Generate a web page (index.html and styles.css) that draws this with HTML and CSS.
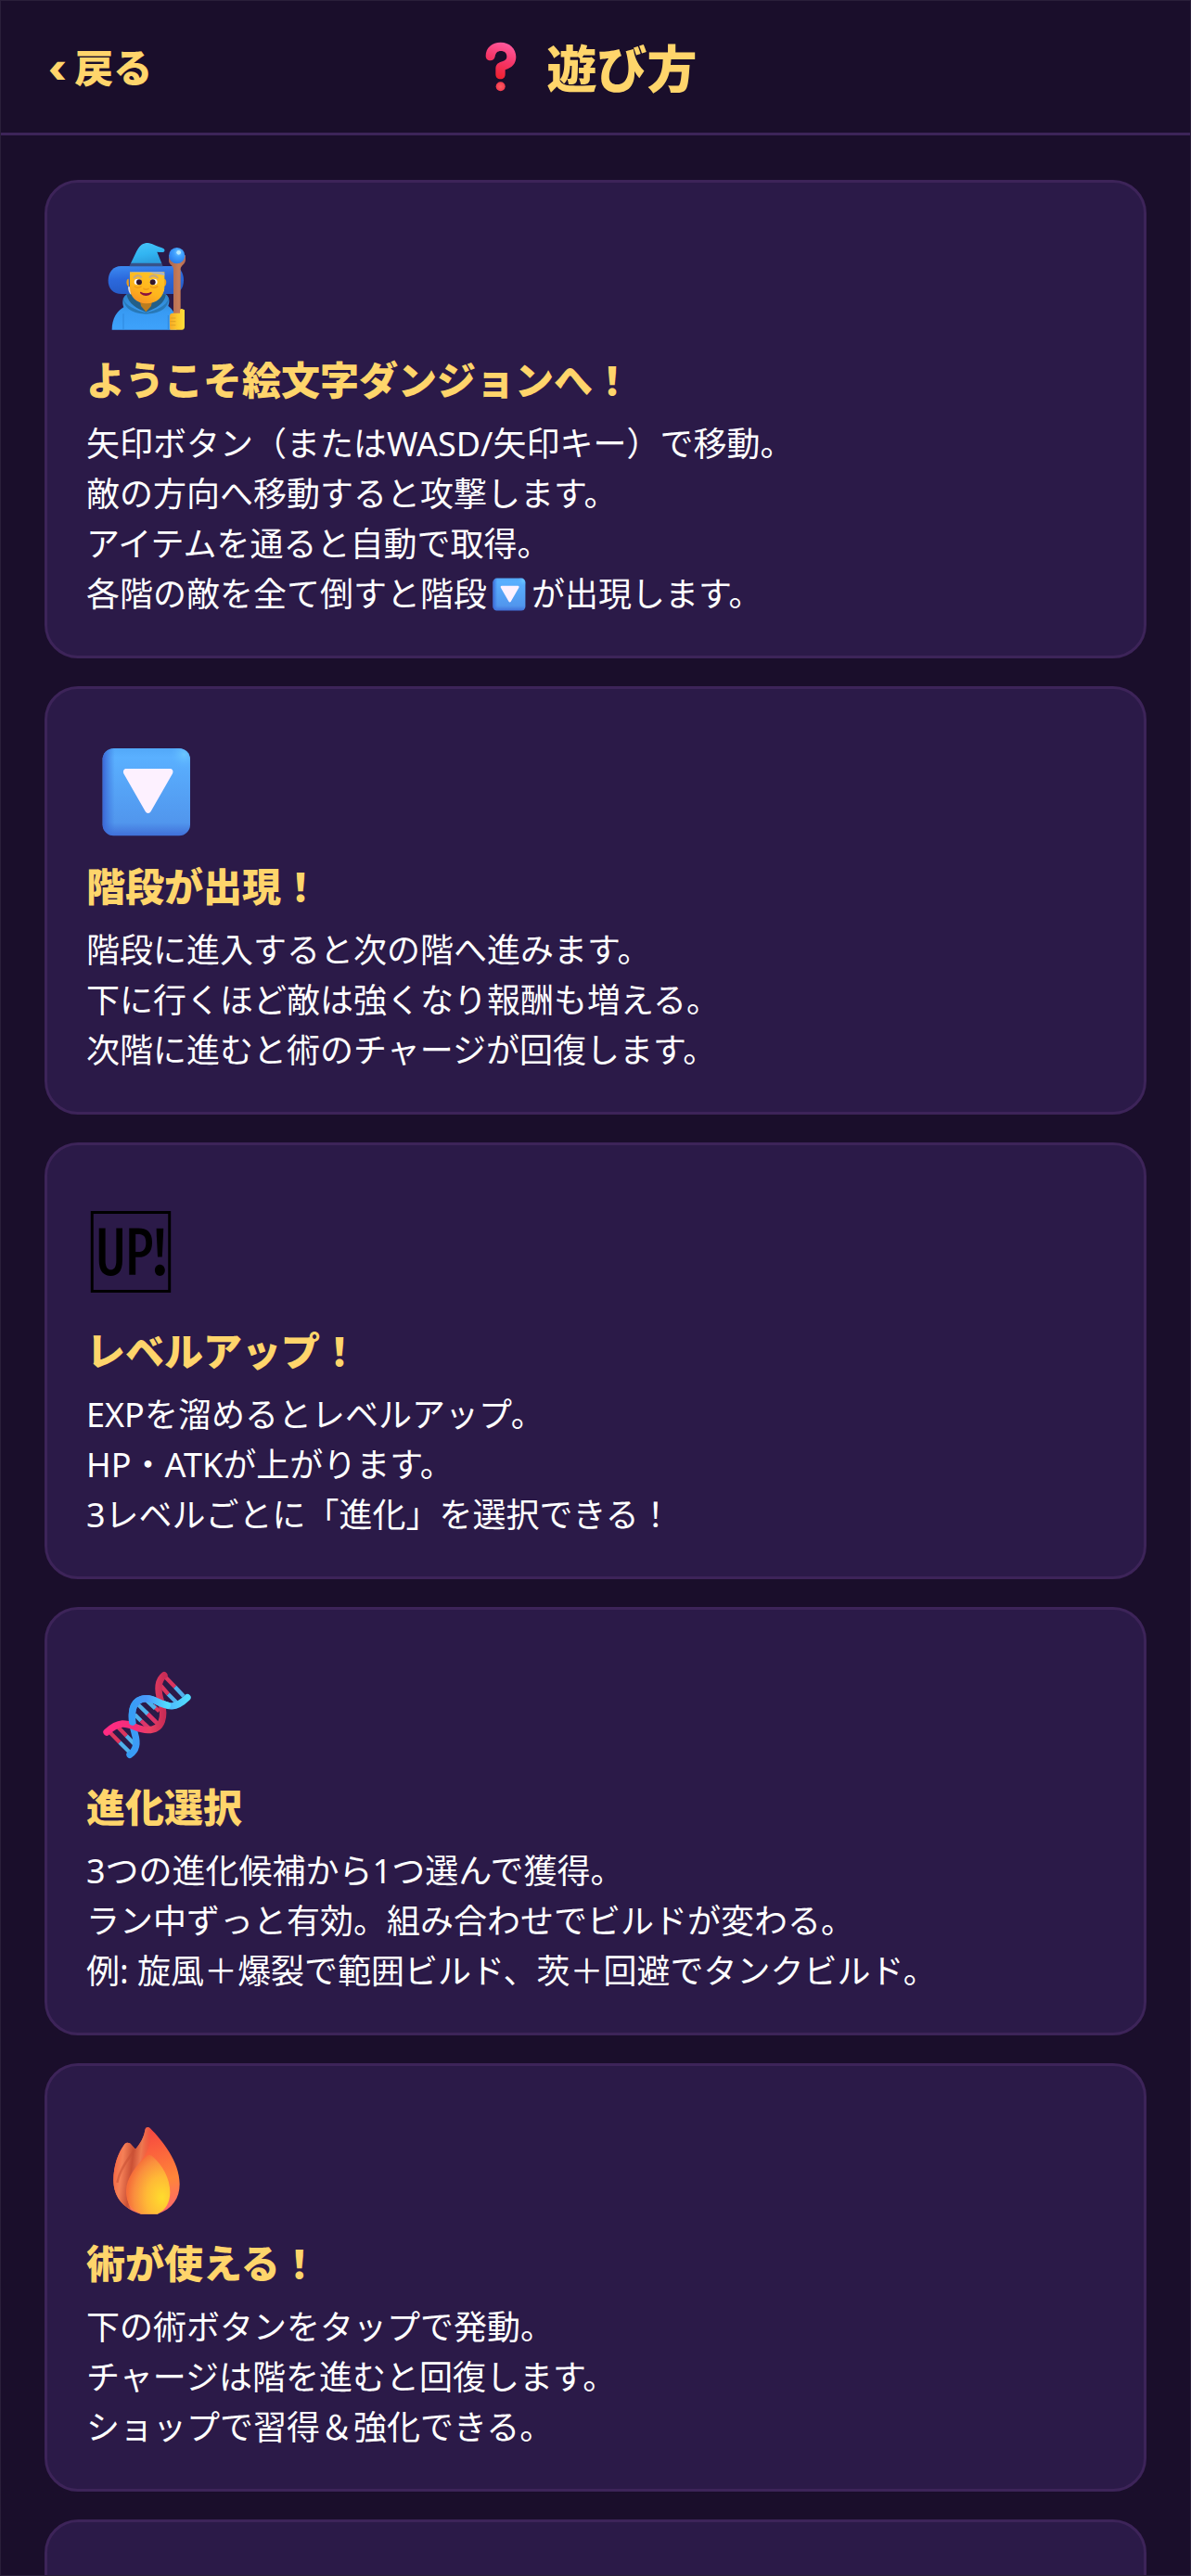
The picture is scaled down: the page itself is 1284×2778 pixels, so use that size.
FILE: index.html
```html
<!DOCTYPE html>
<html lang="ja">
    <head>
        <meta charset="UTF-8">
        <meta name="viewport" content="width=device-width, initial-scale=1.0">
        <title>遊び方</title>
        <link rel="stylesheet" href="styles.css">
    </head>
    <body>
        <header>
            <button type="button" class="back"><span class="chevron">‹ </span>戻る</button>
            <h1>
                <svg class="emoji" viewBox="81 78 183 183" aria-hidden="true">
                    <defs>
                        <linearGradient id="question" x1="0.7" y1="0" x2="0.4" y2="1">
                            <stop offset="0" stop-color="#ff5ba0"/>
                            <stop offset="0.5" stop-color="#f53668"/>
                            <stop offset="1" stop-color="#ef202c"/>
                        </linearGradient>
                        <radialGradient id="questionDot">
                            <stop offset="0" stop-color="#ff5b60"/>
                            <stop offset="1" stop-color="#f33a4e"/>
                        </radialGradient>
                    </defs>
                    <path d="M122 136C122 109 143 92 170 92C199 92 220 112 220 139C220 160 208 174 185 181V195C185 205 179 211 170 211C160 211 154 205 154 195V178C154 165 160 159 171 155C184 151 190 148 190 138C190 126 182 120 171 120C160 120 154 126 152 138C150 147 144 151 137 151C128 151 122 145 122 136Z" fill="url(#question)"/>
                    <circle cx="170" cy="235" r="15" fill="url(#questionDot)"/>
                </svg>
                <span>遊び方</span>
            </h1>
            <div class="spacer"></div>
        </header>

        <main>
            <section class="card">
                <div class="icon">
                    <svg viewBox="72 42 324 324" aria-hidden="true">
                        <defs>
                            <linearGradient id="hat" x1="0" y1="0" x2="0.3" y2="1">
                                <stop offset="0" stop-color="#48c4f8"/>
                                <stop offset="0.6" stop-color="#32b5f2"/>
                                <stop offset="1" stop-color="#2ba0e0"/>
                            </linearGradient>
                            <linearGradient id="brim" x1="0" y1="0" x2="0.2" y2="1">
                                <stop offset="0" stop-color="#3c8cf2"/>
                                <stop offset="0.5" stop-color="#2b68dc"/>
                                <stop offset="1" stop-color="#255cc8"/>
                            </linearGradient>
                            <linearGradient id="face" x1="0.8" y1="0" x2="0.3" y2="1">
                                <stop offset="0" stop-color="#ffc526"/>
                                <stop offset="0.6" stop-color="#ffb51c"/>
                                <stop offset="1" stop-color="#f79325"/>
                            </linearGradient>
                            <linearGradient id="robe" x1="0" y1="0" x2="0" y2="1">
                                <stop offset="0" stop-color="#2e83c8"/>
                                <stop offset="0.5" stop-color="#389bf4"/>
                                <stop offset="1" stop-color="#3ea2fb"/>
                            </linearGradient>
                            <linearGradient id="staff">
                                <stop offset="0" stop-color="#a86450"/>
                                <stop offset="0.6" stop-color="#c77d58"/>
                                <stop offset="1" stop-color="#b46a54"/>
                            </linearGradient>
                            <radialGradient id="orb" cx="0.6" cy="0.3" r="0.7">
                                <stop offset="0" stop-color="#7cc9ff"/>
                                <stop offset="0.4" stop-color="#3fa0ff"/>
                                <stop offset="1" stop-color="#2b7bea"/>
                            </radialGradient>
                            <linearGradient id="hand">
                                <stop offset="0" stop-color="#f7a928"/>
                                <stop offset="0.5" stop-color="#fcc82c"/>
                                <stop offset="1" stop-color="#ffdd3a"/>
                            </linearGradient>
                        </defs>
                        <path d="M151 141H316C340 141 354 160 354 187C354 213 340 231 318 231H153C126 231 110 213 110 188C110 161 126 141 151 141Z" fill="url(#brim)"/>
                        <path d="M122 347C122 310 139 286 160 274C154 258 157 240 170 232H296C308 240 310 255 304 270C319 280 329 300 331 320V347Z" fill="url(#robe)"/>
                        <path d="M170 234C176 264 203 278 232 290C265 278 292 262 296 234L282 230H182Z" fill="#235f88"/>
                        <path d="M158 243C164 270 199 282 232 292C266 282 298 272 306 243C304 282 272 295 232 296C194 295 162 282 158 243Z" fill="#2879b8"/>
                        <path d="M213 255H252L249 270L232 289L216 270Z" fill="#ba7c20"/>
                        <path d="M176 182C168 180 166 203 177 208ZM290 182C300 180 301 203 290 208Z" fill="#ec9d1c"/>
                        <path d="M174 208C174 220 178 229 184 234L188 208ZM291 208C293 218 288 228 281 233L278 208Z" fill="#d5d8e5"/>
                        <path d="M180 160H292V206C292 239 267 262 233 262C202 262 180 241 180 211Z" fill="url(#face)"/>
                        <path d="M180 168C180 163 185 160 192 160H284C291 161 292 164 292 172C281 166 266 169 244 161H191C184 162 181 164 180 168Z" fill="#a7b4c8"/>
                        <path d="M194 178C200 169 211 170 216 176M245 176C251 170 263 170 269 178" fill="none" stroke="#c4aa82" stroke-width="7" stroke-linecap="round"/>
                        <ellipse cx="206" cy="192" rx="12" ry="10" fill="#fff"/>
                        <ellipse cx="257" cy="192" rx="12" ry="10" fill="#fff"/>
                        <circle cx="210" cy="193" r="9" fill="#33172a"/>
                        <circle cx="254" cy="193" r="9" fill="#33172a"/>
                        <path d="M196 207C201 212 211 212 216 207M247 207C252 212 263 212 269 207M225 214Q232 219 240 214" fill="none" stroke="#f09c18" stroke-width="5" stroke-linecap="round"/>
                        <path d="M215 224Q232 233 249 224C252 224 252 228 248 231C239 239 225 239 216 231C212 228 212 224 215 224Z" fill="#8b123f"/>
                        <path d="M183 132L202 92C213 72 223 66 238 66C252 67 263 76 282 81C290 84 294 86 292 92C290 98 282 96 268 95L283 132Z" fill="url(#hat)"/>
                        <path d="M183 131H283L287 142H178Z" fill="#37538a"/>
                        <path d="M159 295V347M304 300V347" stroke="#2f87dd" stroke-width="3"/>
                        <path d="M306 105V124C306 136 321 140 321 151V296H344V151C344 139 360 135 360 121V106Z" fill="url(#staff)"/>
                        <circle cx="332" cy="107" r="26" fill="url(#orb)"/>
                        <circle cx="338" cy="97" r="7" fill="#b6e8ff"/>
                        <path d="M318 293H342V285C342 281 345 278 350 280L357 283V337C357 344 354 347 348 347H310C309 336 308 303 310 298Q311 293 318 293Z" fill="url(#hand)"/>
                        <path d="M312 309H327M311 320H327M311 332H327" stroke="#dda224" stroke-width="3" stroke-linecap="round"/>
                    </svg>
                </div>
                <h2>ようこそ絵文字ダンジョンへ！</h2>
                <p>
                    矢印ボタン（またはWASD/矢印キー）で移動。<br>
                    敵の方向へ移動すると攻撃します。<br>
                    アイテムを通ると自動で取得。<br>
                    各階の敵を全て倒すと階段<svg class="emoji" viewBox="72 60 324 324" aria-label="階段"><use href="#down"/></svg>が出現します。
                </p>
            </section>

            <section class="card">
                <div class="icon">
                    <svg viewBox="72 60 324 324" aria-hidden="true">
                        <defs>
                            <linearGradient id="key" x1="0" y1="0" x2="0" y2="1">
                                <stop offset="0" stop-color="#52a8f8"/>
                                <stop offset="0.1" stop-color="#5ab0ff"/>
                                <stop offset="0.85" stop-color="#5196ed"/>
                                <stop offset="1" stop-color="#406fd8"/>
                            </linearGradient>
                            <linearGradient id="keySide">
                                <stop offset="0" stop-color="#3c66d5"/>
                                <stop offset="0.14" stop-color="#3c78e0" stop-opacity="0"/>
                            </linearGradient>
                            <radialGradient id="keyLight" cx="0.93" cy="0.07" r="0.16">
                                <stop offset="0" stop-color="#6bc6ff"/>
                                <stop offset="1" stop-color="#5cb3ff" stop-opacity="0"/>
                            </radialGradient>
                        </defs>
                        <g id="down">
                            <rect x="92" y="81" width="283" height="283" rx="36" fill="url(#key)"/>
                            <rect x="92" y="81" width="283" height="283" rx="36" fill="url(#keySide)"/>
                            <rect x="92" y="81" width="283" height="283" rx="36" fill="url(#keyLight)"/>
                            <path d="M168 147H310C318 147 322 155 318 163L248 285C244 293 234 293 230 285L160 163C157 155 160 147 168 147Z" fill="#fdf1ff"/>
                        </g>
                    </svg>
                </div>
                <h2>階段が出現！</h2>
                <p>
                    階段に進入すると次の階へ進みます。<br>
                    下に行くほど敵は強くなり報酬も増える。<br>
                    次階に進むと術のチャージが回復します。
                </p>
            </section>

            <section class="card">
                <div class="icon icon-text">🆙</div>
                <h2>レベルアップ！</h2>
                <p>
                    EXPを溜めるとレベルアップ。<br>
                    HP・ATKが上がります。<br>
                    3レベルごとに「進化」を選択できる！
                </p>
            </section>

            <section class="card">
                <div class="icon">
                    <svg viewBox="72 33 324 324" fill="none" stroke-linecap="round" aria-hidden="true">
                        <defs>
                            <linearGradient id="redStrand">
                                <stop offset="0" stop-color="#ff2b83"/>
                                <stop offset="0.5" stop-color="#f42d79"/>
                                <stop offset="0.75" stop-color="#e94063"/>
                                <stop offset="1" stop-color="#c92c56"/>
                            </linearGradient>
                            <linearGradient id="blueStrand">
                                <stop offset="0" stop-color="#379df5"/>
                                <stop offset="0.4" stop-color="#4a98fa"/>
                                <stop offset="1" stop-color="#51dcff"/>
                            </linearGradient>
                        </defs>
                        <g stroke-width="13" stroke-linecap="butt">
                            <path d="M117 260L147 291M143 243L169 270M233 195L270 231M254 171L275 190M297 82L326 112M278 105L304 135" stroke="#db365f"/>
                            <path d="M147 291L178 322M169 270L195 297M206 168L238 199M234 155L262 181M196 201L216 221M326 112L354 142M304 135L331 162" stroke="#4fb1eb"/>
                            <path d="M216 221L241 244M238 199L264 225" stroke="#dc356a"/>
                        </g>
                        <path d="M180 331C202 316 205 292 196 263C180 208 181 151 233 149C283 149 305 206 366 146" stroke="url(#blueStrand)" stroke-width="22"/>
                        <path d="M105 258C166 202 187 250 238 251C288 251 294 204 281 160C267 117 272 89 291 74" stroke="url(#redStrand)" stroke-width="22"/>
                        <path d="M188 225C184 185 190 151 233 149C259 149 278 167 301 171" stroke="url(#blueStrand)" stroke-width="22"/>
                    </svg>
                </div>
                <h2>進化選択</h2>
                <p>
                    3つの進化候補から1つ選んで獲得。<br>
                    ラン中ずっと有効。組み合わせでビルドが変わる。<br>
                    例: 旋風＋爆裂で範囲ビルド、茨＋回避でタンクビルド。
                </p>
            </section>

            <section class="card">
                <div class="icon">
                    <svg viewBox="72 39 324 324" aria-hidden="true">
                        <defs>
                            <linearGradient id="flame" x1="0.45" y1="0" x2="0.7" y2="1">
                                <stop offset="0" stop-color="#f54141"/>
                                <stop offset="0.3" stop-color="#fb613d"/>
                                <stop offset="0.65" stop-color="#ff8639"/>
                                <stop offset="1" stop-color="#ff686c"/>
                            </linearGradient>
                            <linearGradient id="flameSide" x1="0" y1="0.3" x2="1" y2="0.55">
                                <stop offset="0" stop-color="#f5623f"/>
                                <stop offset="0.25" stop-color="#f58057"/>
                                <stop offset="0.5" stop-color="#ca5035"/>
                                <stop offset="0.7" stop-color="#ee7950"/>
                                <stop offset="1" stop-color="#e04b36" stop-opacity="0"/>
                            </linearGradient>
                            <radialGradient id="flameCore" cx="0.82" cy="0.72" r="0.8">
                                <stop offset="0" stop-color="#ffdd2d"/>
                                <stop offset="0.45" stop-color="#ffb936"/>
                                <stop offset="0.8" stop-color="#fa8e3e"/>
                                <stop offset="1" stop-color="#f56d39"/>
                            </radialGradient>
                        </defs>
                        <path d="M163 121C170 113 180 116 185 123L198 137C214 121 226 96 229 76C231 65 239 64 246 70C283 107 341 177 341 250C341 295 318 331 269 347H216C165 334 127 294 127 238C127 191 142 149 163 121Z" fill="url(#flame)"/>
                        <path d="M163 121C170 113 180 116 185 123L198 137C214 121 226 96 229 76C231 65 239 64 246 70C252 126 235 152 209 185C171 234 158 272 184 333C148 316 127 282 127 238C127 191 142 149 163 121Z" fill="url(#flameSide)"/>
                        <path d="M196 137C180 163 148 197 139 245" fill="none" stroke="#c95235" stroke-width="7" opacity="0.6"/>
                        <path d="M234 160C241 153 249 155 255 162C286 190 310 233 310 276C310 310 296 334 269 347H216C184 334 168 310 168 274C168 230 200 190 234 160Z" fill="url(#flameCore)"/>
                    </svg>
                </div>
                <h2>術が使える！</h2>
                <p>
                    下の術ボタンをタップで発動。<br>
                    チャージは階を進むと回復します。<br>
                    ショップで習得＆強化できる。
                </p>
            </section>

            <section class="card">
                <div class="icon"></div>
            </section>
        </main>
    </body>
</html>
```

FILE: styles.css
```css
* {
    box-sizing: border-box;
}

body {
    margin: 0;
    height: 100vh;
    display: flex;
    flex-direction: column;
    overflow: hidden;
    background-color: #1a0e2b;
    color: #fff;
    font-family: 'Noto Sans', 'Noto Sans CJK JP', sans-serif;
    font-size: 36px;
    line-height: 54px;
}

/* thin frame round the whole screen */
body::after {
    content: '';
    position: fixed;
    inset: 0;
    border: 1px solid #2a1f3a;
    pointer-events: none;
}

header {
    flex: none;
    display: flex;
    align-items: center;
    justify-content: space-between;
    padding: 30px 48px;
    border-bottom: 3px solid #3d2459;
}

.back {
    padding: 2px 0 0 4px;
    border: none;
    background: none;
    color: #ffd56b;
    font-family: 'Noto Sans CJK JP', sans-serif;
    font-size: 42px;
    font-weight: 900;
    line-height: 60px;
    cursor: pointer;
}

.chevron {
    font-family: Inter, sans-serif;
}

h1 {
    display: flex;
    align-items: center;
    gap: 14px;
    margin: 0;
    color: #ffd56b;
    font-family: 'Noto Sans CJK JP', sans-serif;
    font-size: 54px;
    font-weight: 900;
    line-height: 83px;
}

h1 .emoji {
    width: 61px;
    height: 61px;
    margin: 0 5px;
}

.spacer {
    width: 144px;
}

main {
    flex: 1;
    min-height: 0;
    display: flex;
    flex-direction: column;
    gap: 30px;
    padding: 48px;
    overflow: hidden;
}

.card {
    flex: none;
    padding: 42px 42px 39px;
    background-color: #2b1a48;
    border: 3px solid #3d2459;
    border-radius: 36px;
}

.icon {
    height: 131px;
    margin-bottom: 8px;
    padding: 15px 11px;
}

.icon svg {
    display: block;
    width: 108px;
    height: 108px;
}

.icon-text {
    height: 140px;
    padding: 0;
    color: #000;
    font-size: 96px;
    line-height: 144px;
}

h2 {
    margin: 0 0 14px;
    color: #ffd56b;
    font-family: 'Noto Sans CJK JP', sans-serif;
    font-size: 42px;
    font-weight: 900;
    line-height: 60px;
}

p {
    margin: 0;
}

p .emoji {
    width: 40px;
    height: 40px;
    margin: 0 4px;
    vertical-align: -7px;
}
```
